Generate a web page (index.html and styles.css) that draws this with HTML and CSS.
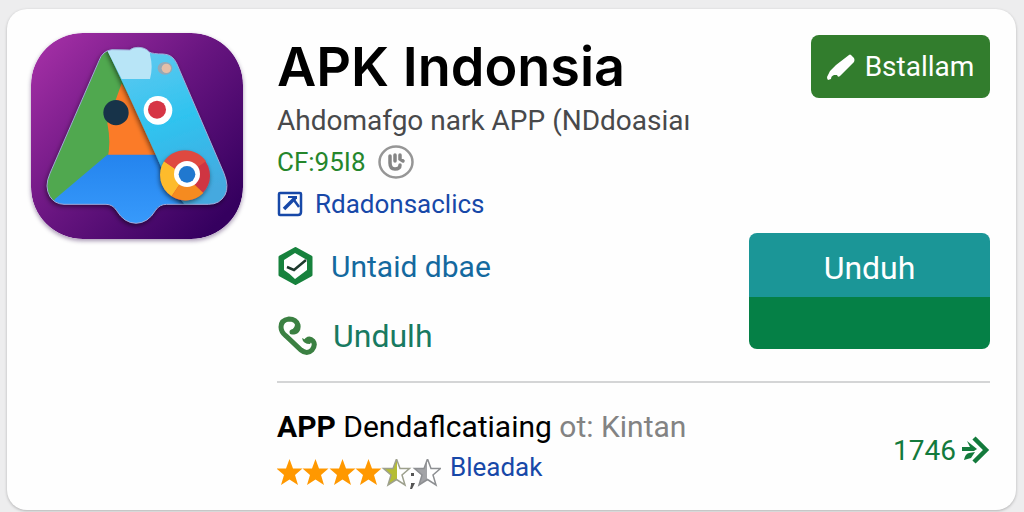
FILE: index.html
```html
<!DOCTYPE html>
<html lang="id">

<head>
    <meta charset="UTF-8">
    <meta name="viewport" content="width=device-width, initial-scale=1.0">
    <title>APK Indonsia</title>

    <link rel="stylesheet" href="styles.css">
</head>

<body>
<main class="card">
    <svg class="app-icon" viewBox="93 99 636 618" aria-hidden="true">
        <defs>
            <linearGradient id="bg" x1="0" y1="0.1" x2="0.9" y2="0.9">
                <stop offset="0" stop-color="#a32fa5"/>
                <stop offset="0.5" stop-color="#681580"/>
                <stop offset="1" stop-color="#35005f"/>
            </linearGradient>
            <linearGradient id="blue" x1="0" y1="0" x2="0" y2="1">
                <stop offset="0" stop-color="#2484ee"/>
                <stop offset="1" stop-color="#3a9dfd"/>
            </linearGradient>
            <linearGradient id="cyan" x1="0" y1="0" x2="0.3" y2="1">
                <stop offset="0" stop-color="#6bcaf0"/>
                <stop offset="0.55" stop-color="#2fc3ef"/>
                <stop offset="1" stop-color="#45a9df"/>
            </linearGradient>
            <filter id="shade" x="-20%" y="-20%" width="140%" height="140%">
                <feDropShadow dx="-3" dy="6" stdDeviation="8" flood-opacity="0.55"/>
            </filter>
            <clipPath id="letter">
                <path id="letter-shape" d="M335 149Q308 152 297 182L150 520Q132 560 150 590Q164 612 192 613H318Q338 613 350 632Q372 669 408 670Q444 669 466 632Q478 613 500 613H625Q660 613 675 585Q688 560 672 520L530 190Q518 163 490 162Q458 162 448 156Q436 142 414 142Q398 142 390 150Z"/>
            </clipPath>
        </defs>
        <rect x="93" y="99" width="636" height="618" rx="155" fill="url(#bg)"/>
        <use href="#letter-shape" filter="url(#shade)"/>
        <g clip-path="url(#letter)">
            <path d="M100 120H400V480H322L100 660Z" fill="#50a84f"/>
            <path d="M365 250L500 480H322Q334 430 322 370Z" fill="#fb7b28"/>
            <path d="M322 464H480L700 640L500 700H120L165 597Z" fill="url(#blue)"/>
            <path d="M322 150V130H560L730 640L560 620Q505 560 470 470L395 305Z" fill="url(#cyan)" filter="url(#shade)"/>
            <path d="M322 152V130H450V165Q460 200 450 237H365Z" fill="#b8e5f7"/>
        </g>
        <use href="#letter-shape" fill="none" stroke="#a4a9dc" stroke-width="3"/>
        <circle cx="348" cy="338" r="38" fill="#173349"/>
        <circle cx="474" cy="331" r="43" fill="#fff"/>
        <circle cx="471" cy="329" r="27" fill="#d63545"/>
        <ellipse cx="495" cy="205" rx="22" ry="19" fill="#94a9b7"/>
        <circle cx="499" cy="205" r="14" fill="#e3bfa9"/>
        <circle cx="556" cy="527" r="74" fill="#cf3543" filter="url(#shade)"/>
        <path d="M556 527L492 484A76 76 0 0 0 515 589Z" fill="#fdbb2c"/>
        <path d="M556 527L515 589A76 76 0 0 0 610 579Z" fill="#f58b20"/>
        <path d="M556 527L492 484A76 76 0 0 1 618 484Z" fill="#df4940"/>
        <circle cx="561" cy="522" r="39" fill="#fff"/>
        <circle cx="561" cy="523" r="25" fill="#2078cf"/>
    </svg>

    <div class="content">
        <div class="top">
            <div class="info">
                <h1>APK Indonsia</h1>
                <p class="subtitle">Ahdomafgo nark APP (NDdoasiaı</p>
                <div class="price">
                    <span>CF:95I8</span>
                    <svg class="badge" viewBox="0 0 36 34" aria-hidden="true">
                        <ellipse cx="18" cy="17" rx="16.5" ry="15.5" fill="none" stroke="#969696" stroke-width="2.5"/>
                        <path d="M12 11V18Q12 24 17 24Q22 24 22 20M17 10V16M22 10V14L25 16" fill="none" stroke="#858585" stroke-width="3.5" stroke-linecap="round"/>
                    </svg>
                </div>
                <a class="source" href="#">
                    <svg class="source-icon" viewBox="0 0 26 26" aria-hidden="true">
                        <path d="M3 2H23Q24 2 24 3V21Q24 24 21 24H3Q2 24 2 23V3Q2 2 3 2Z" fill="none" stroke="#1748a8" stroke-width="2.5"/>
                        <path d="M11 6H19V8" fill="none" stroke="#1748a8" stroke-width="2"/>
                        <path d="M7 18L18 7" fill="none" stroke="#1748a8" stroke-width="3.5"/>
                        <path d="M17 9L22 16" fill="none" stroke="#1748a8" stroke-width="2.5"/>
                    </svg>
                    Rdadonsaclics
                </a>
                <ul class="links">
                    <li>
                        <a class="verified" href="#">
                            <svg class="link-icon" viewBox="0 0 40 40" aria-hidden="true">
                                <path d="M18.5 2.5L34 11V29L18.5 37.5L3 29V11Z" fill="#17823d" stroke="#17823d" stroke-width="3" stroke-linejoin="round"/>
                                <path d="M18 7L30 14V24L18 33Q12 27 7 24V14Z" fill="#fff"/>
                                <path d="M10 21L17 24L29 14" fill="none" stroke="#1d392c" stroke-width="2.5"/>
                            </svg>
                            Untaid dbae
                        </a>
                    </li>
                    <li>
                        <a class="call" href="#">
                            <svg class="link-icon" viewBox="0 0 40 40" aria-hidden="true">
                                <path d="M15 16Q22 16 21 9Q19 3 12 3Q4 4 4 11Q4 16 9 20L24 34Q30 39 35 34Q39 29 36 25Q33 22 30 24" fill="none" stroke="#3b8042" stroke-width="5" stroke-linecap="round"/>
                                <path d="M14 14Q18 12 18 8L23 10Q22 18 16 18ZM25 22Q26 28 33 28L36 23Q32 20 29 24Z" fill="#3b8042"/>
                            </svg>
                            Undulh
                        </a>
                    </li>
                </ul>
            </div>

            <div class="actions">
                <button type="button" class="install">
                    <svg class="install-icon" viewBox="0 0 28 26" aria-hidden="true">
                        <path d="M22 1Q23 0 24 1L27 4Q28 6 27 8L13 22Q11 24 10 21L7 21Q4 22 4 25L1 26Q0 25 0 23L3 17L9 11Z" fill="#fff"/>
                    </svg>
                    Bstallam
                </button>
                <button type="button" class="download">Unduh</button>
            </div>
        </div>

        <div class="bottom">
            <div class="review">
                <p class="caption"><strong>APP</strong> Dendaflcatiaing <span class="muted">ot: Kintan</span></p>
                <div class="rating">
                    <svg class="stars" viewBox="0 0 164 30" role="img" aria-label="4.5">
                        <defs>
                            <path id="star" d="M12.5 0L16 9.5H25.5L18 16L21 26L12.5 20.5L4 26L7 16L-0.5 9.500H9Z"/>
                            <linearGradient id="half-green">
                                <stop offset="0.5" stop-color="#b5bd35"/>
                                <stop offset="0.5" stop-color="#fff"/>
                            </linearGradient>
                            <linearGradient id="half-gray">
                                <stop offset="0.5" stop-color="#a2a3a6"/>
                                <stop offset="0.5" stop-color="#fff"/>
                            </linearGradient>
                        </defs>
                        <g fill="#ff9800">
                            <use href="#star"/>
                            <use href="#star" x="26"/>
                            <use href="#star" x="53"/>
                            <use href="#star" x="79"/>
                        </g>
                        <use href="#star" x="107" fill="url(#half-green)" stroke="#9da08d" stroke-width="1.5"/>
                        <path d="M134 14h3v3h-3zM134 24h4l-3 6h-2l1-4z" fill="#555"/>
                        <use href="#star" x="138" fill="url(#half-gray)" stroke="#8d8f92" stroke-width="1.5"/>
                    </svg>
                    <a href="#">Bleadak</a>
                </div>
            </div>
            <a class="more" href="#">
                1746
                <svg class="more-icon" viewBox="0 0 28 28" aria-hidden="true">
                    <path d="M12 2L24 14L12 26" fill="none" stroke="#137a3c" stroke-width="4.5"/>
                    <path d="M0 11L8 11L5 5L10 9L15 13L12 15H0ZM13 16L9 22L2 24Q3 18 7 17Z" fill="#137a3c"/>
                </svg>
            </a>
        </div>
    </div>
</main>
</body>

</html>
```
FILE: styles.css
```css
* {
    box-sizing: border-box;
}

body {
    margin: 0;
    padding: 9px 8px 3px 7px;
    background-color: #ededee;
    font-family: Roboto, "Liberation Sans", sans-serif;
    color: #000;
}

h1, p, ul {
    margin: 0;
    padding: 0;
}

a {
    text-decoration: none;
}

.card {
    display: flex;
    align-items: flex-start;
    gap: 34px;
    padding: 24px 26px 15px 24px;
    border-radius: 20px;
    background-color: #fefefe;
    box-shadow: 0 1px 3px rgba(0, 0, 0, 0.25);
}

.app-icon {
    flex: none;
    width: 212px;
    height: 206px;
    border-radius: 52px;
    box-shadow: 0 2px 4px rgba(40, 0, 70, 0.4);
}

.content {
    flex: 1;
}

.top {
    display: flex;
    justify-content: space-between;
    padding-bottom: 10px;
    border-bottom: 2px solid #d4d5d6;
}

h1 {
    font-family: Inter, Roboto, sans-serif;
    font-size: 54px;
    font-weight: 600;
    line-height: 68px;
}

.subtitle {
    font-size: 28px;
    line-height: 40px;
    color: #48494b;
}

.price {
    display: flex;
    align-items: center;
    gap: 12px;
    height: 42px;
    font-size: 26px;
    color: #25862b;
}

.badge {
    width: 36px;
    height: 34px;
}

.source {
    display: flex;
    align-items: center;
    gap: 12px;
    height: 42px;
    font-size: 26px;
    color: #1748a8;
}

.source-icon {
    width: 26px;
    height: 26px;
}

.links {
    margin-top: 6px;
    list-style: none;
}

.links a {
    display: flex;
    align-items: center;
    gap: 14px;
    height: 70px;
    font-size: 30px;
}

.link-icon {
    width: 40px;
    height: 40px;
}

.links .verified {
    color: #14699f;
}

.links .call {
    gap: 16px;
    color: #187a61;
    font-size: 32px;
}

.actions {
    display: flex;
    flex-direction: column;
    align-items: flex-end;
    justify-content: space-between;
    padding: 2px 0 22px;
}

.actions button {
    border: none;
    border-radius: 8px;
    color: #fff;
    font-family: inherit;
}

.install {
    display: flex;
    align-items: center;
    justify-content: center;
    gap: 10px;
    width: 179px;
    height: 63px;
    padding: 0;
    background-color: #327d2d;
    font-size: 28px;
}

.install-icon {
    width: 28px;
    height: 26px;
}

.download {
    width: 241px;
    height: 116px;
    padding: 0 0 46px;
    background: linear-gradient(#1b9697 64px, #058046 64px);
    font-size: 32px;
}

.bottom {
    display: flex;
    align-items: center;
    justify-content: space-between;
    padding-top: 22px;
}

.caption {
    font-size: 30px;
    line-height: 44px;
}

.caption strong {
    font-weight: 700;
}

.muted {
    color: #838383;
}

.rating {
    display: flex;
    gap: 9px;
    height: 46px;
}

.stars {
    width: 164px;
    height: 30px;
    margin-top: 10px;
}

.rating a {
    font-size: 26px;
    line-height: 36px;
    color: #1748a8;
}

.more {
    display: flex;
    align-items: center;
    gap: 6px;
    font-size: 28px;
    color: #137a3c;
}

.more-icon {
    width: 28px;
    height: 28px;
}
```
